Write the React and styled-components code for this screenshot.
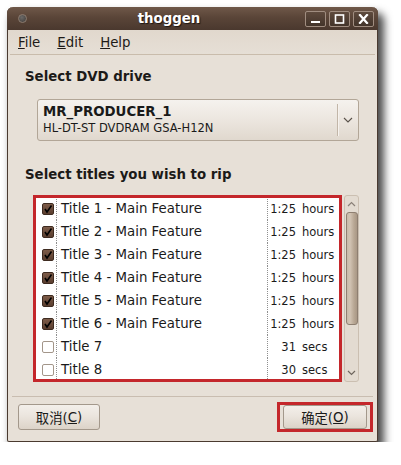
import styled, { createGlobalStyle } from "styled-components";

const GlobalStyle = createGlobalStyle`
  html, body {
    margin: 0;
    padding: 0;
    background: #ffffff;
  }
  body {
    font-family: "DejaVu Sans", "Noto Sans CJK SC", sans-serif;
    font-size: 13.33px;
    color: #1a1a1a;
  }
`;

const titles = [
  { name: "Title 1 - Main Feature", num: "1:25", unit: "hours", checked: true },
  { name: "Title 2 - Main Feature", num: "1:25", unit: "hours", checked: true },
  { name: "Title 3 - Main Feature", num: "1:25", unit: "hours", checked: true },
  { name: "Title 4 - Main Feature", num: "1:25", unit: "hours", checked: true },
  { name: "Title 5 - Main Feature", num: "1:25", unit: "hours", checked: true },
  { name: "Title 6 - Main Feature", num: "1:25", unit: "hours", checked: true },
  { name: "Title 7", num: "31", unit: "secs", checked: false },
  { name: "Title 8", num: "30", unit: "secs", checked: false },
];

export default function App() {
  return (
    <>
      <GlobalStyle />
      <Page>
        <Window>
          <TitleBar>
            <MenuDot />
            <Title>thoggen</Title>
            <WinButtons>
              <WinButton aria-label="minimize">
                <svg width="11" height="10" viewBox="0 0 11 10">
                  <rect x="1" y="7" width="9" height="2" fill="#fff" />
                </svg>
              </WinButton>
              <WinButton aria-label="maximize">
                <svg width="11" height="10" viewBox="0 0 11 10">
                  <rect x="1.5" y="1" width="8" height="8" fill="none" stroke="#fff" strokeWidth="1.6" />
                </svg>
              </WinButton>
              <WinButton aria-label="close">
                <svg width="11" height="10" viewBox="0 0 11 10">
                  <path d="M2 1 L9 9 M9 1 L2 9" stroke="#fff" strokeWidth="2.2" strokeLinecap="square" />
                </svg>
              </WinButton>
            </WinButtons>
          </TitleBar>

          <MenuBar>
            <MenuRow>
              <MenuItem><u>F</u>ile</MenuItem>
              <MenuItem><u>E</u>dit</MenuItem>
              <MenuItem><u>H</u>elp</MenuItem>
            </MenuRow>
          </MenuBar>

          <Content>
            <Heading>Select DVD drive</Heading>
            <Combo>
              <ComboText>
                <DriveName>MR_PRODUCER_1</DriveName>
                <DriveModel>HL-DT-ST DVDRAM GSA-H12N</DriveModel>
              </ComboText>
              <ComboArrow>
                <svg width="10" height="6" viewBox="0 0 10 6">
                  <path d="M1 1 L5 5 L9 1" fill="none" stroke="#5a524a" strokeWidth="1.1" />
                </svg>
              </ComboArrow>
            </Combo>

            <Heading $gap={26}>Select titles you wish to rip</Heading>
            <ListArea>
              <TitleList>
                <Rows>
                  {titles.map((t) => (
                    <Row key={t.name}>
                      <CheckCell>
                        <Check $checked={t.checked}>
                          {t.checked && (
                            <svg width="10" height="10" viewBox="0 0 10 10">
                              <path d="M2 5 L4 8 L8.5 1.5" fill="none" stroke="#000" strokeWidth="1.6" />
                            </svg>
                          )}
                        </Check>
                      </CheckCell>
                      <NameCell>{t.name}</NameCell>
                      <TimeCell>
                        <TimeNum>{t.num}</TimeNum>
                        <TimeUnit>{t.unit}</TimeUnit>
                      </TimeCell>
                    </Row>
                  ))}
                </Rows>
              </TitleList>
              <ScrollBar>
                <ScrollArrow>
                  <svg width="9" height="6" viewBox="0 0 9 6">
                    <path d="M1 5 L4.5 1.5 L8 5" fill="none" stroke="#8a8078" strokeWidth="1.2" />
                  </svg>
                </ScrollArrow>
                <Thumb />
                <ScrollSpace />
                <ScrollArrow>
                  <svg width="9" height="6" viewBox="0 0 9 6">
                    <path d="M1 1 L4.5 4.5 L8 1" fill="none" stroke="#6e655d" strokeWidth="1.2" />
                  </svg>
                </ScrollArrow>
              </ScrollBar>
            </ListArea>
          </Content>

          <Footer>
            <Separator />
            <ButtonRow>
              <Button $width={82} $height={26}>取消(<u>C</u>)</Button>
              <Highlight>
                <Button $width={84} $height={24}>确定(<u>O</u>)</Button>
              </Highlight>
            </ButtonRow>
          </Footer>
        </Window>
      </Page>
    </>
  );
}

const Page = styled.div`
  padding: 7px 0 0 7px;
`;

const Window = styled.div`
  width: 371px;
  box-sizing: border-box;
  background: #e7e0d7;
  border: 1px solid #4a3a30;
  border-top: none;
  border-radius: 6px 6px 2px 2px;
  box-shadow: 5px 7px 9px 1px rgba(0, 0, 0, 0.72);
  display: flex;
  flex-direction: column;
`;

const TitleBar = styled.div`
  height: 23px;
  margin: 0 -1px;
  border-radius: 6px 6px 0 0;
  background: linear-gradient(#6f5849 0%, #5a4538 45%, #4a382e 100%);
  display: grid;
  grid-template-columns: auto 1fr auto;
  align-items: center;
  padding: 0 4px 0 11px;
`;

const MenuDot = styled.div`
  width: 7px;
  height: 7px;
  border-radius: 50%;
  background: radial-gradient(circle at 40% 35%, #6c6a68, #3e3a37);
  border: 1px solid #8c7c70;
`;

const Title = styled.div`
  text-align: center;
  color: #ffffff;
  font-weight: bold;
  font-size: 13.33px;
  text-shadow: 1px 1px 1px #1e1510;
  padding-left: 6px;
`;

const WinButtons = styled.div`
  display: flex;
  gap: 3px;
`;

const WinButton = styled.div`
  width: 19px;
  height: 14px;
  border: 1px solid #a08d80;
  border-radius: 2px;
  background: linear-gradient(#5e4a3d, #43342a);
  display: flex;
  align-items: center;
  justify-content: center;
`;

const MenuBar = styled.div`
  background: linear-gradient(#e1d8cd, #e6dfd6);
  padding: 0 2px;
`;

const MenuRow = styled.div`
  height: 24px;
  display: flex;
  align-items: center;
  border-bottom: 1px solid #c9bcac;
`;

const MenuItem = styled.span`
  padding: 0 8px;
  margin-right: 1px;
  font-size: 13.33px;
  color: #1e1a17;
`;

const Content = styled.div`
  padding: 14px 18px 0 17px;
  display: flex;
  flex-direction: column;
`;

const Heading = styled.div`
  font-weight: bold;
  font-size: 13.33px;
  line-height: 16px;
  margin-top: ${(p) => p.$gap || 0}px;
  color: #1c1a18;
`;

const Combo = styled.div`
  margin: 14px 0 0 12px;
  height: 42px;
  box-sizing: border-box;
  border: 1px solid #b2a697;
  border-radius: 3px;
  background: linear-gradient(#f5f2ee 0%, #ece6df 50%, #e0d8ce 100%);
  display: flex;
`;

const ComboText = styled.div`
  flex: 1;
  padding: 4px 0 0 5px;
`;

const DriveName = styled.div`
  font-weight: bold;
  font-size: 13.33px;
  line-height: 16px;
`;

const DriveModel = styled.div`
  font-size: 11.5px;
  line-height: 16px;
`;

const ComboArrow = styled.div`
  width: 20px;
  margin: 4px 0;
  border-left: 1px solid #c2b6a8;
  box-shadow: inset 1px 0 0 #f6f2ee;
  display: flex;
  align-items: center;
  justify-content: center;
`;

const ListArea = styled.div`
  margin: 12px 0 0 8px;
  height: 187px;
  display: flex;
  gap: 2px;
`;

const TitleList = styled.div`
  width: 309px;
  box-sizing: border-box;
  border: 3px solid #c4272b;
  background: #ffffff;
  overflow: hidden;
`;

const Rows = styled.div`
  margin-top: -1px;
`;

const Row = styled.div`
  height: 23px;
  display: grid;
  grid-template-columns: 21px 211px 1fr;
  align-items: stretch;
`;

const CheckCell = styled.div`
  border-right: 1px dotted #8f8f8f;
  display: flex;
  align-items: center;
  padding-left: 6px;
`;

const Check = styled.div`
  width: 12px;
  height: 12px;
  box-sizing: border-box;
  border-radius: 2px;
  border: 1px solid ${(p) => (p.$checked ? "#3e2b20" : "#a3968a")};
  background: ${(p) =>
    p.$checked ? "linear-gradient(#7d5c49, #5a3e2f)" : "#ffffff"};
  display: flex;
  align-items: center;
  justify-content: center;
`;

const NameCell = styled.div`
  border-right: 1px dotted #8f8f8f;
  padding-left: 4px;
  font-size: 13.33px;
  display: flex;
  align-items: center;
`;

const TimeCell = styled.div`
  display: grid;
  grid-template-columns: 28px auto;
  column-gap: 6px;
  align-items: center;
  font-size: 11.5px;
`;

const TimeNum = styled.span`
  text-align: right;
`;

const TimeUnit = styled.span``;

const ScrollBar = styled.div`
  width: 15px;
  box-sizing: border-box;
  border: 1px solid #cbbfb1;
  border-radius: 3px;
  background: #e3dbd1;
  display: flex;
  flex-direction: column;
  align-items: center;
`;

const ScrollArrow = styled.div`
  height: 16px;
  width: 100%;
  display: flex;
  align-items: center;
  justify-content: center;
`;

const Thumb = styled.div`
  width: 12px;
  height: 113px;
  box-sizing: border-box;
  border: 1px solid #8e7f71;
  border-radius: 3px;
  background: linear-gradient(90deg, #c9baa9 0%, #d2c4b4 30%, #b8a794 70%, #a99886 100%);
`;

const ScrollSpace = styled.div`
  flex: 1;
`;

const Footer = styled.div`
  padding: 14px 4px 9px 4px;
  display: flex;
  flex-direction: column;
`;

const Separator = styled.div`
  height: 1px;
  background: #c9bdb0;
`;

const ButtonRow = styled.div`
  margin-top: 5px;
  padding-left: 6px;
  height: 30px;
  display: flex;
  justify-content: space-between;
  align-items: center;
`;

const Button = styled.div`
  width: ${(p) => p.$width}px;
  height: ${(p) => p.$height}px;
  box-sizing: border-box;
  border: 1px solid #a3988b;
  border-radius: 3px;
  background: linear-gradient(#f3efea 0%, #ebe5de 45%, #dcd3c8 100%);
  display: flex;
  align-items: center;
  justify-content: center;
  font-size: 13.33px;
  color: #1a1a1a;
`;

const Highlight = styled.div`
  border: 3px solid #c4272b;
  padding: 0 3px;
  display: flex;
  align-items: center;
`;
